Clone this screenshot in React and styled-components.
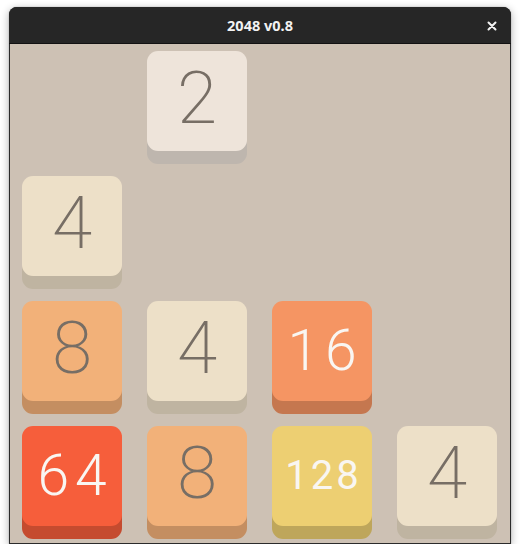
import React from "react";
import styled, { createGlobalStyle } from "styled-components";

const Global = createGlobalStyle`
  html, body { margin: 0; padding: 0; background: #ffffff; }
  body { font-family: "Noto Sans", "DejaVu Sans", sans-serif; }
`;

const Window = styled.div`
  width: 502px;
  margin: 7px 0 0 9px;
  border-radius: 8px 8px 0 0;
  background: #262626;
  box-shadow: 0 2px 8px rgba(0, 0, 0, 0.32), 0 0 1px rgba(0, 0, 0, 0.5);
  overflow: hidden;
`;

const TitleBar = styled.div`
  position: relative;
  height: 37px;
  display: flex;
  align-items: center;
  justify-content: center;
  background: #262626;
  border-bottom: 1px solid #121212;
  box-sizing: border-box;
`;

const Title = styled.div`
  color: #f2f2f2;
  font-family: "Noto Sans", "DejaVu Sans", sans-serif;
  font-weight: 700;
  font-size: 14.5px;
  line-height: 1;
  margin-top: 1px;
`;

const CloseButton = styled.div`
  position: absolute;
  right: 14px;
  top: 0;
  height: 37px;
  display: flex;
  align-items: center;
`;

const Board = styled.div`
  background: #cdc1b4;
  border: 1px solid #2b2b2b;
  border-top: none;
  height: 500px;
  box-sizing: border-box;
  padding: 7px 12px 0 12px;
  display: grid;
  grid-template-columns: repeat(4, 100px);
  grid-template-rows: repeat(4, 100px);
  column-gap: 25px;
  row-gap: 25px;
`;

const palette = {
  2: { bg: "#eee4da", sh: "#beb6ae", fg: "#776e65" },
  4: { bg: "#ede0c8", sh: "#bfb4a1", fg: "#776e65" },
  8: { bg: "#f2b179", sh: "#c48e61", fg: "#776e65" },
  16: { bg: "#f59563", sh: "#c5774f", fg: "#f9f6f2" },
  64: { bg: "#f65e3b", sh: "#c54b2f", fg: "#f9f6f2" },
  128: { bg: "#edcf72", sh: "#bea65b", fg: "#f9f6f2" },
};

const Tile = styled.div`
  width: 100px;
  height: 100px;
  border-radius: 11px;
  background: ${(p) => p.$bg};
  box-shadow: 0 13px 0 ${(p) => p.$sh};
  color: ${(p) => p.$fg};
  display: flex;
  align-items: center;
  justify-content: center;
  font-family: "Roboto", "Liberation Sans", sans-serif;
  font-weight: ${(p) => p.$weight};
  font-size: ${(p) => p.$size}px;
  letter-spacing: ${(p) => p.$spacing}px;
  line-height: 1;
`;

const Digits = styled.span`
  display: block;
  margin-top: ${(p) => p.$shift}px;
  margin-right: ${(p) => -p.$spacing}px;
`;

const Empty = styled.div``;

const grid = [
  [0, 2, 0, 0],
  [4, 0, 0, 0],
  [8, 4, 16, 0],
  [64, 8, 128, 4],
];

function sizing(v) {
  const len = String(v).length;
  if (len === 1) return { size: 73, spacing: 0, shift: -6, weight: 200 };
  if (len === 2) return { size: 57, spacing: 6, shift: -1, weight: 300 };
  return { size: 40, spacing: 3, shift: -1, weight: 400 };
}

export default function App() {
  return (
    <>
      <Global />
      <Window>
        <TitleBar>
          <Title>2048 v0.8</Title>
          <CloseButton>
            <svg width="10" height="10" viewBox="0 0 10 10">
              <path d="M1.5 1.5 L8.5 8.5 M8.5 1.5 L1.5 8.5" stroke="#f2f2f2" strokeWidth="2" strokeLinecap="round" />
            </svg>
          </CloseButton>
        </TitleBar>
        <Board>
          {grid.flat().map((v, i) => {
            if (!v) return <Empty key={i} />;
            const c = palette[v];
            const s = sizing(v);
            return (
              <Tile key={i} $bg={c.bg} $sh={c.sh} $fg={c.fg} $size={s.size} $spacing={s.spacing} $weight={s.weight}>
                <Digits $shift={s.shift} $spacing={s.spacing}>{v}</Digits>
              </Tile>
            );
          })}
        </Board>
      </Window>
    </>
  );
}
